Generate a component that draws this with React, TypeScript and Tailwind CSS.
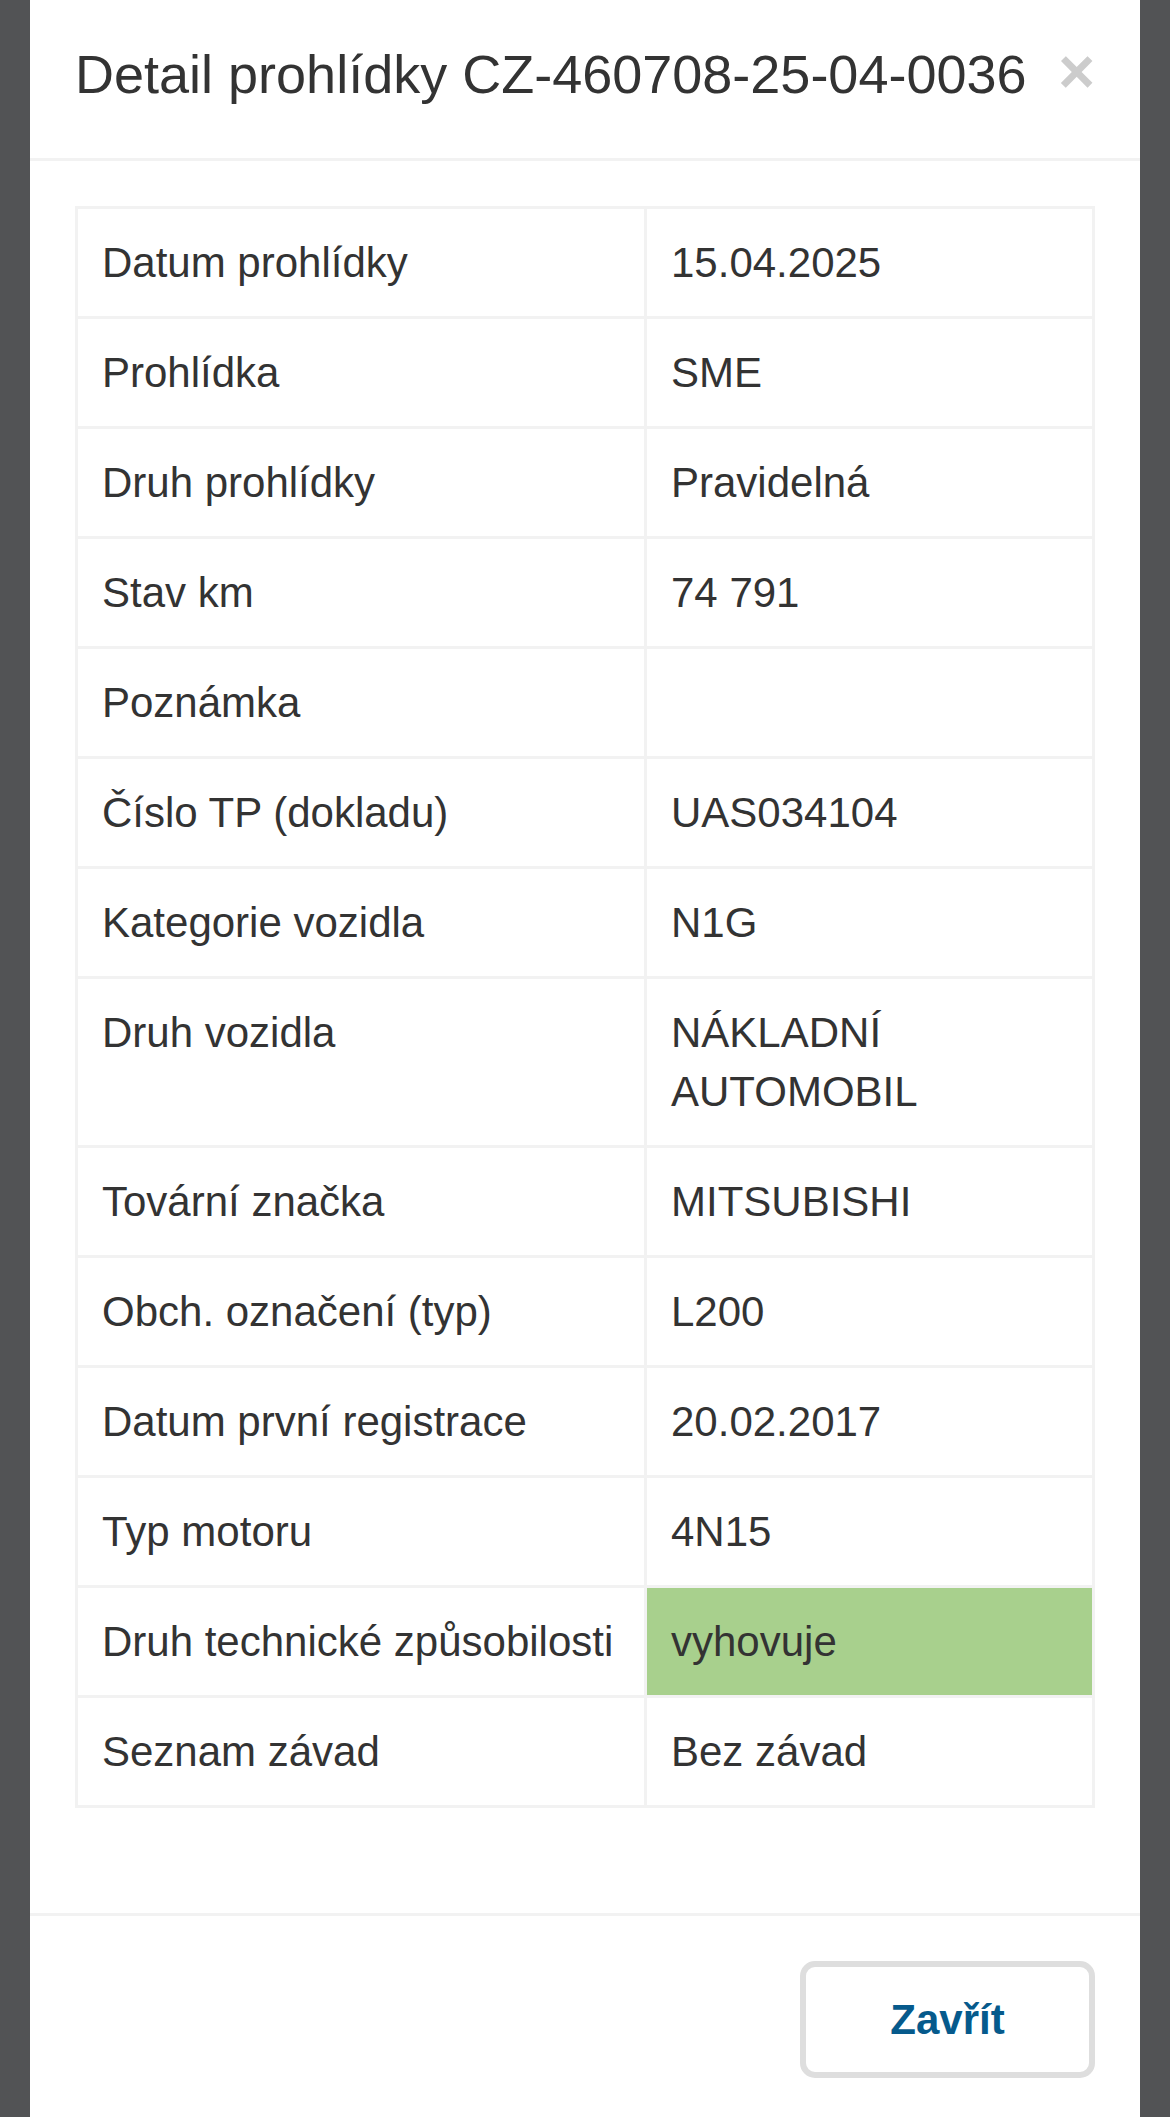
import React from 'react'

type Row = {
  label: string
  value: React.ReactNode
  ok?: boolean
}

const rows: Row[] = [
  { label: 'Datum prohlídky', value: '15.04.2025' },
  { label: 'Prohlídka', value: 'SME' },
  { label: 'Druh prohlídky', value: 'Pravidelná' },
  { label: 'Stav km', value: '74 791' },
  { label: 'Poznámka', value: '' },
  { label: 'Číslo TP (dokladu)', value: 'UAS034104' },
  { label: 'Kategorie vozidla', value: 'N1G' },
  {
    label: 'Druh vozidla',
    value: (
      <>
        NÁKLADNÍ
        <br />
        AUTOMOBIL
      </>
    ),
  },
  { label: 'Tovární značka', value: 'MITSUBISHI' },
  { label: 'Obch. označení (typ)', value: 'L200' },
  { label: 'Datum první registrace', value: '20.02.2017' },
  { label: 'Typ motoru', value: '4N15' },
  { label: 'Druh technické způsobilosti', value: 'vyhovuje', ok: true },
  { label: 'Seznam závad', value: 'Bez závad' },
]

const App: React.FC = () => {
  return (
    <div
      className="h-[2117px] overflow-hidden bg-[#525355] px-[30px] text-[#333333]"
      style={{ fontFamily: '"Liberation Sans", Arial, Helvetica, sans-serif' }}
    >
      <div className="h-full bg-white">
        {/* header */}
        <div className="flex items-start justify-between border-b-[3px] border-[#f2f2f2] px-[45px] pt-[36px] pb-[45px]">
          <h4 className="text-[54px] leading-[77px] font-normal">
            Detail prohlídky CZ-460708-25-04-0036
          </h4>
          <button className="mt-[4px] text-[63px] leading-none font-bold text-[#cccccc]">
            ×
          </button>
        </div>

        {/* body */}
        <div className="p-[45px]">
          <table className="mb-[60px] w-[1020px] table-fixed border-separate border-spacing-0 border-t-[3px] border-l-[3px] border-[#f2f2f2] text-[42px] leading-[59px]">
            <tbody>
              {rows.map((row, i) => (
                <tr key={i}>
                  <td
                    className={
                      i === 0
                        ? 'w-[569px] border-r-[3px] border-b-[3px] border-[#f2f2f2] p-[24px] align-top'
                        : 'border-r-[3px] border-b-[3px] border-[#f2f2f2] p-[24px] align-top'
                    }
                  >
                    {row.label}
                  </td>
                  <td
                    className={
                      row.ok
                        ? 'border-r-[3px] border-b-[3px] border-[#f2f2f2] bg-[#a8d08d] p-[24px] align-top'
                        : 'border-r-[3px] border-b-[3px] border-[#f2f2f2] p-[24px] align-top'
                    }
                  >
                    {row.value}
                  </td>
                </tr>
              ))}
            </tbody>
          </table>
        </div>

        {/* footer */}
        <div className="flex justify-end border-t-[3px] border-[#f2f2f2] p-[45px]">
          <button className="h-[117px] w-[295px] rounded-[15px] border-[6px] border-[#dedede] bg-white text-[42px] font-bold text-[#065a8c]">
            Zavřít
          </button>
        </div>
      </div>
    </div>
  )
}

export default App
